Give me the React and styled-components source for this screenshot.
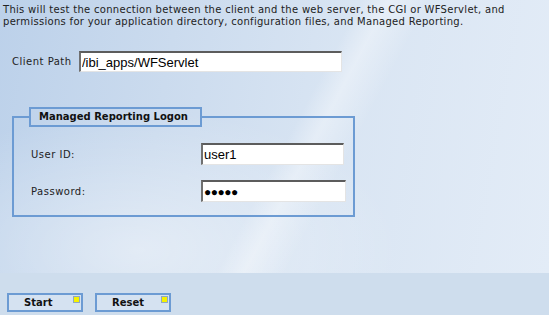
import React from "react";
import styled, { createGlobalStyle } from "styled-components";

const Global = createGlobalStyle`
  html, body { margin: 0; padding: 0; }
  body {
    width: 549px;
    height: 315px;
    overflow: hidden;
    font-family: "DejaVu Sans", Verdana, sans-serif;
    background: #cedded;
  }
`;

const Page = styled.div`
  width: 549px;
  height: 315px;
  display: flex;
  flex-direction: column;
`;

const Main = styled.div`
  height: 273px;
  box-sizing: border-box;
  padding: 4px 0 0 3px;
  background:
    linear-gradient(118deg, rgba(255,255,255,0) 52%, rgba(255,255,255,0.35) 56%, rgba(255,255,255,0) 62%),
    radial-gradient(ellipse 260px 140px at 140px 250px, rgba(255,255,255,0.45), rgba(255,255,255,0)),
    linear-gradient(100deg, #bcd1ea 0%, #cbdbee 30%, #d9e5f3 60%, #e3ecf7 100%);
`;

const Intro = styled.p`
  margin: 0;
  font-size: 10px;
  line-height: 12px;
  color: #222;
  white-space: nowrap;
  letter-spacing: 0.3px;
`;

const PathRow = styled.div`
  display: flex;
  align-items: center;
  gap: 7px;
  margin: 23px 0 0 9px;
`;

const Label = styled.label`
  font-size: 10px;
  color: #222;
  letter-spacing: ${(p) => p.$ls || 0}px;
  width: ${(p) => (p.$w ? `${p.$w}px` : "auto")};
`;

const TextInput = styled.input`
  box-sizing: border-box;
  width: ${(p) => p.$w}px;
  height: ${(p) => p.$h || 22}px;
  margin: 0;
  padding: 0 0 0 1px;
  border-style: solid;
  border-width: 2px 1px 1px 2px;
  border-color: #5c5c5c #e4e4e4 #e4e4e4 #707070;
  background: #ffffff;
  font-family: "Liberation Sans", Arial, sans-serif;
  font-size: 13px;
  color: #000;
  outline: none;
`;

const MaskedInput = styled(TextInput)`
  font-size: 12px;
  letter-spacing: -0.5px;
  padding-left: 1px;
`;

const Fieldset = styled.fieldset`
  margin: 35px 0 0 9px;
  width: 343px;
  box-sizing: border-box;
  padding: 0;
  border: 2px solid #6c9bd3;
  min-width: 0;
`;

const Legend = styled.legend`
  margin-left: 15px;
  padding: 2px 12px 3px 8px;
  border: 2px solid #6c9bd3;
  font-size: 10px;
  font-weight: bold;
  color: #111;
`;

const Grid = styled.div`
  display: grid;
  grid-template-columns: 170px auto;
  row-gap: 15px;
  align-items: center;
  padding: 16px 0 13px 17px;
`;

const Footer = styled.div`
  flex: 1;
  display: flex;
  align-items: flex-start;
  gap: 12px;
  padding: 20px 0 0 7px;
  background: #cedded;
`;

const Button = styled.button`
  position: relative;
  box-sizing: border-box;
  width: 76px;
  height: 19px;
  margin: 0;
  padding: 0 0 0 ${(p) => p.$pl}px;
  border: 2px solid #6c9bd3;
  background: #d5e2f1;
  font-family: "DejaVu Sans", Verdana, sans-serif;
  font-size: 10px;
  font-weight: bold;
  color: #111;
  text-align: left;
`;

const Marker = styled.span`
  position: absolute;
  top: 1px;
  right: 1px;
  width: 5px;
  height: 5px;
  background: #f6f200;
  border: 1px solid #8ea8c4;
`;

export default function App() {
  return (
    <Page>
      <Global />
      <Main>
        <Intro>
          This will test the connection between the client and the web server, the CGI or WFServlet, and
          <br />
          permissions for your application directory, configuration files, and Managed Reporting.
        </Intro>
        <PathRow>
          <Label $w={60} $ls={0.5}>Client Path</Label>
          <TextInput $w={263} $h={21} defaultValue="/ibi_apps/WFServlet" />
        </PathRow>
        <Fieldset>
          <Legend>Managed Reporting Logon</Legend>
          <Grid>
            <Label $ls={0.5}>User ID:</Label>
            <TextInput $w={143} defaultValue="user1" />
            <Label $ls={0.5}>Password:</Label>
            <MaskedInput $w={145} readOnly value="●●●●●" aria-label="Password" />
          </Grid>
        </Fieldset>
      </Main>
      <Footer>
        <Button $pl={15}>
          Start
          <Marker />
        </Button>
        <Button $pl={15}>
          Reset
          <Marker />
        </Button>
      </Footer>
    </Page>
  );
}
